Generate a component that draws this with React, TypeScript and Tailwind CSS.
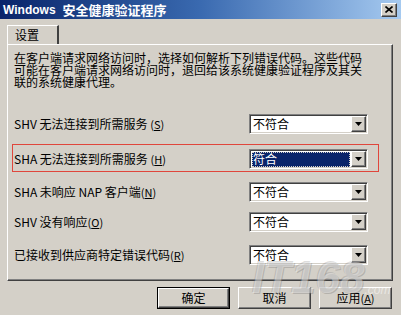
import React from "react";

const FONT = { fontFamily: '"Noto Sans CJK SC", "Liberation Sans", sans-serif' };

function DropBtn() {
  return (
    <div className="w-[15px] h-full bg-[#d4d0c8] border border-t-white border-l-white border-b-[#404040] border-r-[#404040] shadow-[inset_-1px_-1px_0_#808080,inset_1px_1px_0_#d4d0c8] flex items-center justify-center">
      <svg width="7" height="4" viewBox="0 0 7 4">
        <path d="M0 0H7L3.5 4Z" fill="#000" />
      </svg>
    </div>
  );
}

function Combo({ value, selected }: { value: string; selected?: boolean }) {
  return (
    <div className="w-[119px] h-[20px] bg-white border border-t-[#808080] border-l-[#808080] border-b-white border-r-white shadow-[inset_1px_1px_0_#404040,inset_-1px_-1px_0_#d4d0c8] flex p-[1px]">
      <div className="flex-1 flex items-center pl-[1px] pr-[1px]">
        {selected ? (
          <div className="w-full h-[15px] bg-[#0a246a] text-white border border-dotted border-[#d4d0c8] flex items-center text-[12px] leading-none">
            {value}
          </div>
        ) : (
          <span className="text-[12px] leading-none text-black pl-[1px]">{value}</span>
        )}
      </div>
      <DropBtn />
    </div>
  );
}

function Label({ pre, key_ }: { pre: string; key_: string }) {
  return (
    <div className="w-[235px] text-[12px] leading-none text-black whitespace-nowrap">
      {pre}
      <span className="text-[11px]">(</span>
      <span className="underline text-[11px]">{key_}</span>
      <span className="text-[11px]">)</span>
    </div>
  );
}

function Button({ children, def }: { children: React.ReactNode; def?: boolean }) {
  return (
    <div className={"w-[73px] h-[22px] " + (def ? "border border-black" : "")}>
      <div className="w-full h-full bg-[#d4d0c8] border border-t-white border-l-white border-b-[#404040] border-r-[#404040] shadow-[inset_-1px_-1px_0_#808080,inset_1px_1px_0_#d4d0c8] flex items-center justify-center text-[12px] leading-none text-black">
        {children}
      </div>
    </div>
  );
}

export default function App() {
  return (
    <div className="w-[401px] h-[315px] bg-[#d4d0c8] relative overflow-hidden" style={FONT}>
      {/* title bar */}
      <div className="h-[19px] bg-gradient-to-r from-[#0a246a] via-[#3a6ab0] to-[#a6caf0] flex items-center justify-between pl-[3px] pr-[4px]">
        <div className="text-white font-bold text-[13px] leading-none whitespace-nowrap flex items-center gap-[7px]">
          <span style={{ fontFamily: '"Liberation Sans", sans-serif' }} className="text-[12px]">Windows</span>
          <span>安全健康验证程序</span>
        </div>
        <div className="w-[16px] h-[14px] bg-[#d4d0c8] border border-t-white border-l-white border-b-[#404040] border-r-[#404040] shadow-[inset_-1px_-1px_0_#808080] flex items-center justify-center">
          <svg width="8" height="7" viewBox="0 0 8 7">
            <path d="M0.5 0.5L7.5 6.5M7.5 0.5L0.5 6.5" stroke="#000" strokeWidth="1.6" />
          </svg>
        </div>
      </div>

      {/* body */}
      <div className="pl-[7px] pr-[8px] pt-[6px]">
        {/* tab */}
        <div className="w-[52px] h-[19px] border-t border-l border-white border-r-2 border-r-[#404040] flex items-start pl-[7px] pt-[3px] text-[12px] leading-none text-black">
          设置
        </div>
        {/* panel */}
        <div className="h-[237px] border border-t-white border-l-white border-b-[#404040] border-r-[#404040] shadow-[inset_-1px_-1px_0_#808080] pt-[7px]">
          <div className="pl-[6px] text-[12px] leading-[12px] text-black whitespace-nowrap">
            <div>在客户端请求网络访问时，选择如何解析下列错误代码。这些代码</div>
            <div>可能在客户端请求网络访问时，退回给该系统健康验证程序及其关</div>
            <div>联的系统健康代理。</div>
          </div>

          <div className="mt-[26px] h-[20px] flex items-center pl-[6px]">
            <Label pre="SHV 无法连接到所需服务 " key_="S" />
            <Combo value="不符合" />
          </div>

          <div className="mt-[10px] ml-[4px] w-[367px] border border-[#e0463c] pl-[1px] pt-[4px] pb-[2px]">
            <div className="h-[20px] flex items-center">
              <Label pre="SHA 无法连接到所需服务 " key_="H" />
              <Combo value="符合" selected />
            </div>
          </div>

          <div className="mt-[10px] h-[20px] flex items-center pl-[6px]">
            <Label pre="SHA 未响应 NAP 客户端" key_="N" />
            <Combo value="不符合" />
          </div>

          <div className="mt-[10px] h-[20px] flex items-center pl-[6px]">
            <Label pre="SHV 没有响应" key_="O" />
            <Combo value="不符合" />
          </div>

          <div className="mt-[13px] h-[20px] flex items-center pl-[6px]">
            <Label pre="已接收到供应商特定错误代码" key_="R" />
            <Combo value="不符合" />
          </div>
        </div>

        {/* buttons */}
        <div className="mt-[6px] flex justify-end gap-[8px] mr-[1px]">
          <Button def>确定</Button>
          <Button>取消</Button>
          <Button>
            应用<span className="text-[11px]">(</span>
            <span className="underline text-[11px]">A</span>
            <span className="text-[11px]">)</span>
          </Button>
        </div>
      </div>

      {/* watermark */}
      <div className="absolute left-[252px] top-[256px] pointer-events-none select-none flex items-end">
        <span
          className="text-[44px] font-black italic leading-none text-white/40"
          style={{ fontFamily: '"Liberation Sans", sans-serif', textShadow: "1px 1px 0 rgba(120,120,120,0.35), -1px -1px 0 rgba(120,120,120,0.25)" }}
        >
          IT168
        </span>
        <span
          className="text-[12px] italic leading-none text-white/50 mb-[4px]"
          style={{ fontFamily: '"Liberation Sans", sans-serif' }}
        >
          .com
        </span>
      </div>
    </div>
  );
}
